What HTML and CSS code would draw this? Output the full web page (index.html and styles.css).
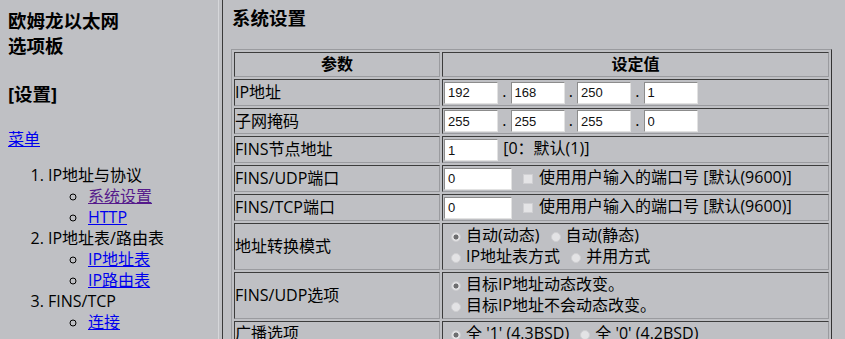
FILE: index.html
```html
<!DOCTYPE html>
<html lang="zh-CN">
<head>
<meta charset="utf-8">
<title>欧姆龙以太网选项板</title>
<link rel="stylesheet" href="styles.css">
</head>
<body>
<div class="frameset">
  <div class="menu-frame">
    <h3 class="brand">欧姆龙以太网<br>选项板</h3>
    <h3 class="section">[设置]</h3>
    <p class="menu-link"><a href="#">菜单</a></p>
    <ol class="nav">
      <li>IP地址与协议
        <ul>
          <li><a href="#" class="visited">系统设置</a></li>
          <li><a href="#">HTTP</a></li>
        </ul>
      </li>
      <li>IP地址表/路由表
        <ul>
          <li><a href="#">IP地址表</a></li>
          <li><a href="#">IP路由表</a></li>
        </ul>
      </li>
      <li>FINS/TCP
        <ul>
          <li><a href="#">连接</a></li>
        </ul>
      </li>
    </ol>
  </div>
  <div class="frame-border"></div>
  <div class="main-frame">
    <h3 class="page-title">系统设置</h3>
    <table class="settings">
      <tr><th class="col-param">参数</th><th class="col-value">设定值</th></tr>
      <tr>
        <td>IP地址</td>
        <td><input class="ip" type="text" value="192" readonly> . <input class="ip" type="text" value="168" readonly> . <input class="ip" type="text" value="250" readonly> . <input class="ip" type="text" value="1" readonly></td>
      </tr>
      <tr>
        <td>子网掩码</td>
        <td><input class="ip" type="text" value="255" readonly> . <input class="ip" type="text" value="255" readonly> . <input class="ip" type="text" value="255" readonly> . <input class="ip" type="text" value="0" readonly></td>
      </tr>
      <tr>
        <td>FINS节点地址</td>
        <td><input class="ip" type="text" value="1" readonly> <span class="hint">[0：默认(1)]</span></td>
      </tr>
      <tr>
        <td>FINS/UDP端口</td>
        <td><input class="port" type="text" value="0" readonly><span class="check"></span>使用用户输入的端口号 [默认(9600)]</td>
      </tr>
      <tr>
        <td>FINS/TCP端口</td>
        <td><input class="port" type="text" value="0" readonly><span class="check"></span>使用用户输入的端口号 [默认(9600)]</td>
      </tr>
      <tr>
        <td>地址转换模式</td>
        <td class="multi"><span class="radio on"></span>自动(动态) <span class="radio"></span>自动(静态)<br><span class="radio"></span>IP地址表方式 <span class="radio"></span>并用方式</td>
      </tr>
      <tr>
        <td>FINS/UDP选项</td>
        <td class="multi"><span class="radio on"></span>目标IP地址动态改变。<br><span class="radio"></span>目标IP地址不会动态改变。</td>
      </tr>
      <tr>
        <td>广播选项</td>
        <td><span class="radio on"></span>全 '1' (4.3BSD) <span class="radio"></span>全 '0' (4.2BSD)</td>
      </tr>
    </table>
  </div>
</div>
</body>
</html>
```

FILE: styles.css
```css
html, body {
  margin: 0;
  padding: 0;
  height: 339px;
  overflow: hidden;
  background: #bfc0c4;
}

body {
  font-family: "Open Sans", "Noto Sans CJK SC", sans-serif;
  font-size: 16px;
  color: #000;
}

.frameset {
  display: flex;
  height: 339px;
}

.menu-frame {
  width: 202px;
  flex: none;
  padding: 8px;
  background: #bfc0c4;
}

.frame-border {
  flex: none;
  width: 5px;
  border-left: 1px solid #d6d7da;
  border-right: 1px solid #3a3a3a;
  box-sizing: border-box;
  background: #bfc0c4;
}

.main-frame {
  flex: 1;
  padding: 8px;
  min-width: 0;
}

a {
  color: #0000ee;
}

a.visited {
  color: #551a8b;
}

.brand {
  margin: 0;
  font-size: 18.5px;
  line-height: 25px;
  font-weight: bold;
}

.section {
  margin: 23px 0 0 0;
  font-size: 18.5px;
  line-height: 25px;
  font-weight: bold;
}

.menu-link {
  margin: 23px 0 0 0;
  line-height: 21px;
}

.nav {
  margin: 15px 0 0 0;
  padding-left: 40px;
  line-height: 21px;
}

.nav ul {
  margin: 0;
  padding-left: 40px;
  list-style-type: circle;
}

.page-title {
  margin: 0 0 22px 0;
  font-size: 18.5px;
  line-height: 19px;
  font-weight: bold;
  padding-left: 1px;
}

.settings {
  width: 601px;
  border-collapse: separate;
  border-spacing: 2px;
  border: 1px solid;
  border-color: #9a9b9f #333 #333 #9a9b9f;
  line-height: 21px;
}

.settings th,
.settings td {
  border: 1px solid;
  border-color: #3c3c3c #9a9b9f #9a9b9f #3c3c3c;
  padding: 1px;
  text-align: left;
  vertical-align: middle;
}

.settings td:first-child {
  padding-left: 0;
}

.settings td.multi {
  padding-bottom: 2px;
}

.settings th {
  text-align: center;
  font-weight: bold;
}

.col-param {
  width: 202px;
}

.settings input {
  box-sizing: border-box;
  height: 22px;
  margin: 0;
  padding: 0 3px;
  border: 1px solid;
  border-color: #8c8c8c #e2e2e2 #e2e2e2 #8c8c8c;
  background: #fff;
  font-family: "Liberation Sans", Arial, sans-serif;
  font-size: 13px;
  color: #111;
  vertical-align: middle;
  outline: none;
}

.settings input.ip {
  width: 54px;
}

.settings input.port {
  width: 68px;
}

.hint {
  margin-left: 1px;
}

.check {
  display: inline-block;
  width: 10px;
  height: 10px;
  box-sizing: border-box;
  margin: 0 6px 0 11px;
  border: 1px solid #d0d0d3;
  background: #e4e4e6;
  vertical-align: -1px;
}

.radio {
  display: inline-block;
  width: 10px;
  height: 10px;
  box-sizing: border-box;
  margin: 0 5px 0 7px;
  border-radius: 50%;
  border: 1px solid #cfcfd2;
  background: #e3e3e5;
  vertical-align: -1px;
}

.radio.on {
  background: radial-gradient(circle, #6e6e70 0, #6e6e70 2.2px, #e3e3e5 2.8px);
}
```
